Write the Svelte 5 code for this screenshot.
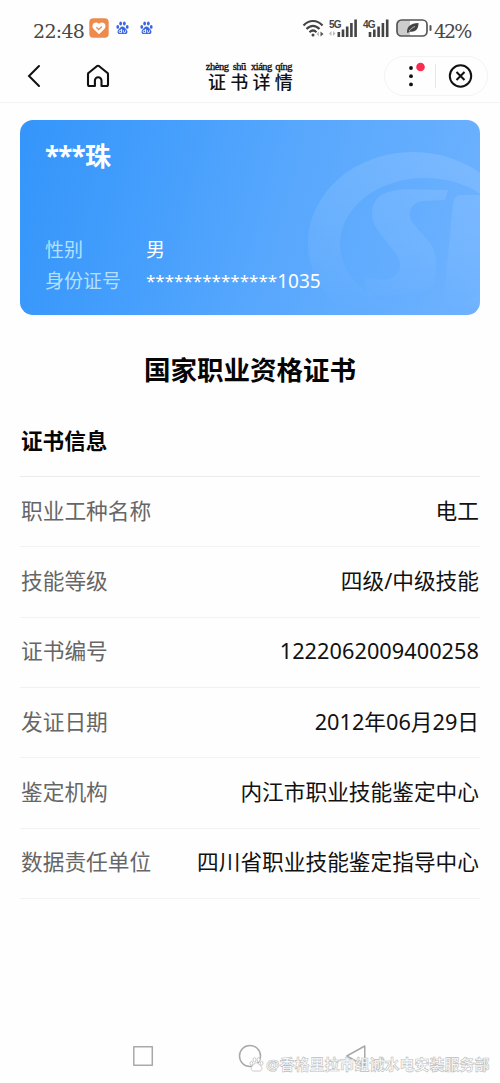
<script>
  const title = [
    { py: 'zhèng', zi: '证' },
    { py: 'shū', zi: '书' },
    { py: 'xiáng', zi: '详' },
    { py: 'qíng', zi: '情' }
  ];

  const rows = [
    { label: '职业工种名称', value: '电工' },
    { label: '技能等级', value: '四级/中级技能' },
    { label: '证书编号', value: '1222062009400258', num: true },
    { label: '发证日期', value: '2012年06月29日' },
    { label: '鉴定机构', value: '内江市职业技能鉴定中心' },
    { label: '数据责任单位', value: '四川省职业技能鉴定指导中心' }
  ];
</script>

{#snippet paw()}
  <svg class="paw" width="13" height="14" viewBox="0 0 14 15">
    <ellipse cx="1.9" cy="6.3" rx="1.5" ry="2" />
    <ellipse cx="5" cy="2.6" rx="1.5" ry="2.1" />
    <ellipse cx="9" cy="2.6" rx="1.5" ry="2.1" />
    <ellipse cx="12.1" cy="6.3" rx="1.5" ry="2" />
    <path d="M7 5.8c2 0 2.7 2 4.2 3.2 2 1.7 1.3 5-1.2 5H4c-2.5 0-3.2-3.3-1.2-5C4.3 7.8 5 5.8 7 5.8z" />
    <path class="du" d="M6 8.5v4H4.6a1.2 1.2 0 0 1 0-2.5H6M8 10v1.6c0 1.2 2.2 1.2 2.2 0V10" />
  </svg>
{/snippet}

<div class="screen">
  <div class="status">
    <span class="time">22:48</span>
    <svg class="heart" width="20" height="20" viewBox="0 0 20 20">
      <rect x=".3" y=".3" width="19.4" height="19.4" rx="4" fill="#ee8a4e" />
      <path d="M10 16.3 4.6 11C1.3 7.4 5.8 2.2 10 5.8c4.2-3.6 8.7 1.6 5.4 5.2z" fill="#fff" />
      <path d="M7.4 9.3 9.7 11.5l3.2-3" fill="none" stroke="#ee8a4e" stroke-width="1.3" />
    </svg>
    {@render paw()}
    {@render paw()}

    <div class="signals">
      <svg width="142" height="22" viewBox="0 0 142 22">
        <g fill="none" stroke="#444" stroke-width="2.2">
          <path d="M1.5 7.5c5.5-6 13.5-6 19 0" />
          <path d="M4.5 11c4-4.3 9-4.3 13 0" />
          <path d="M7.5 14.2c2.3-2.2 4.7-2.2 7 0" />
        </g>
        <circle cx="11" cy="17" r="1.5" fill="#444" />
        <path d="M17 13.5v5l-2.5-2.5z" fill="#bbb" />
        <path d="M18.5 13.5v5l3-2.5z" fill="#555" />
        <text x="27" y="9.5">5G</text>
        <path d="M29.5 13v5L27 15.5zM31 13v5l2.5-2.5z" fill="#bbb" />
        <g fill="#444">
          <rect x="35.5" y="14" width="2.6" height="5" />
          <rect x="39.7" y="11.5" width="2.6" height="7.5" />
          <rect x="43.9" y="8.5" width="2.6" height="10.5" />
          <rect x="48.1" y="5" width="2.6" height="14" />
          <rect x="52.3" y="1.5" width="2.6" height="17.5" />
        </g>
        <text x="61" y="9.5">4G</text>
        <g fill="#444">
          <rect x="66.7" y="14" width="2.6" height="5" />
          <rect x="71" y="11.5" width="2.6" height="7.5" />
          <rect x="75.3" y="8.5" width="2.6" height="10.5" />
          <rect x="79.6" y="5" width="2.6" height="14" />
          <rect x="83.9" y="1.5" width="2.6" height="17.5" />
        </g>
        <path d="M99 2h9v16h-9a4 4 0 0 1-4-4V6a4 4 0 0 1 4-4z" fill="#ccc" />
        <rect x="95" y="2" width="30" height="16" rx="4.5" fill="none" stroke="#555" stroke-width="1.7" />
        <rect x="127.5" y="7" width="2" height="6" rx="1" fill="#555" />
        <path d="M105 14.5c0-6 3-9 11.5-9.5 0 6-2.5 9.5-9 8.5l-1.5 1.5z" fill="#444" />
        <path d="M107 13c2-2.300 3.500-3.500 6-4.500" fill="none" stroke="#ddd" stroke-width=".8" />
      </svg>
      <span class="time pct">42%</span>
    </div>
  </div>

  <div class="nav">
    <svg class="back" width="14" height="24" viewBox="0 0 14 24">
      <path d="M12 2 2 12l10 10" fill="none" stroke="#111" stroke-width="2" stroke-linecap="round" />
    </svg>
    <svg class="home" width="24" height="24" viewBox="0 0 24 24">
      <path d="M2 10.3a2 2 0 0 1 .8-1.6l8-6.5a2 2 0 0 1 2.4 0l8 6.5a2 2 0 0 1 .8 1.6V20.5a1.5 1.5 0 0 1-1.5 1.5H15.5V16.5a3.3 3.3 0 0 0-6.6 0V22H3.5A1.5 1.5 0 0 1 2 20.5z" fill="none" stroke="#111" stroke-width="2.1" stroke-linejoin="round" />
    </svg>
    <div class="title">
      {#each title as t}
        <div class="char"><span class="py">{t.py}</span><span class="zi">{t.zi}</span></div>
      {/each}
    </div>
    <div class="capsule">
      <svg width="104" height="40" viewBox="0 0 104 40">
        <g fill="#111">
          <circle cx="27" cy="12" r="1.9" />
          <circle cx="27" cy="20.2" r="1.9" />
          <circle cx="27" cy="28.4" r="1.9" />
        </g>
        <circle cx="36.5" cy="11" r="4.3" fill="#fb2c50" />
        <path d="M51.5 8v24" stroke="#e6e6e6" />
        <circle cx="76.5" cy="20" r="10.7" fill="none" stroke="#111" stroke-width="2" />
        <path d="m72.5 16 8 8m0-8-8 8" stroke="#111" stroke-width="2" />
      </svg>
    </div>
  </div>

  <div class="card">
    <svg class="emblem" width="460" height="195" viewBox="0 0 460 195">
      <defs>
        <linearGradient id="ring" x1="0" y1="32" x2="0" y2="192" gradientUnits="userSpaceOnUse">
          <stop offset="0" stop-color="#fff" stop-opacity=".12" />
          <stop offset=".6" stop-color="#fff" stop-opacity=".065" />
          <stop offset="1" stop-color="#fff" stop-opacity="0" />
        </linearGradient>
      </defs>
      <g fill="url(#ring)">
        <path fill-rule="evenodd" d="M288 123a105 91 0 1 0 210 0a105 91 0 1 0-210 0zM320 124a85 66 0 1 0 170 0a85 66 0 1 0-170 0z" />
        <path d="M428 70 425 80 402 81C389 83 387 96 393 103L410 123C417 132 417 148 415 157 413 167 410 170 402 172 384 175 364 176 347 175L344 157C356 160 370 162 376 155 382 149 381 141 376 134L359 112C349 99 350 84 360 76 368 70 380 69 393 69.5z" />
        <path d="M441 75H460V195H422L433 84C434 78 436 75 441 75z" />
      </g>
    </svg>
    <div class="name">***珠</div>
    <div class="info">
      <span class="key">性别</span><span>男</span>
      <span class="key">身份证号</span><span class="idno"><span class="stars">**************</span>1035</span>
    </div>
  </div>

  <h1>国家职业资格证书</h1>
  <h2>证书信息</h2>

  <div class="list">
    {#each rows as row}
      <div class="row">
        <span class="label">{row.label}</span>
        <span class="value" class:num={row.num}>{row.value}</span>
      </div>
    {/each}
  </div>

  <div class="keys">
    <svg width="230" height="24" viewBox="0 0 230 24">
      <g fill="none" stroke="#a9a9a9" stroke-width="1.5" stroke-linejoin="round">
        <rect x="1.8" y="2.8" width="18.5" height="18.5" />
        <circle cx="118" cy="12" r="10.5" />
        <path d="M232.8 2v20l-18-10z" />
      </g>
    </svg>
  </div>
  <div class="mark">
    <svg width="15" height="15" viewBox="0 0 14 15" fill="#fff" stroke="#bbb" stroke-width=".8">
      <ellipse cx="1.9" cy="6.3" rx="1.4" ry="1.9" />
      <ellipse cx="5" cy="2.8" rx="1.5" ry="2.1" />
      <ellipse cx="9" cy="2.8" rx="1.5" ry="2.1" />
      <ellipse cx="12.1" cy="6.3" rx="1.4" ry="1.9" />
      <path d="M7 5.8c2 0 2.7 2 4.2 3.2 2 1.7 1.3 5-1.2 5H4c-2.5 0-3.2-3.3-1.2-5C4.3 7.8 5 5.8 7 5.8z" />
    </svg>
    <span>@香格里拉市组诚水电安装服务部</span>
  </div>
</div>

<style>
  :global(body) {
    background: #fefefe;
  }
  .screen {
    position: relative;
    width: 500px;
    height: 1083px;
    overflow: hidden;
    background: #fefefe;
    font-family: 'Noto Sans', 'Noto Sans CJK SC', sans-serif;
    color: #111;
    display: flex;
    flex-direction: column;
  }
  svg {
    display: block;
    flex-shrink: 0;
  }
  .status {
    height: 50px;
    box-sizing: border-box;
    padding: 18px 30px 0 33px;
    display: flex;
    align-items: flex-start;
  }
  .time {
    font-family: 'DejaVu Serif', serif;
    font-size: 19px;
    line-height: 27px;
    letter-spacing: -0.7px;
    color: #484848;
    width: 56px;
  }
  .paw {
    margin: 3px 0 0 7px;
    fill: #3a66e0;
  }
  .paw + .paw {
    margin-left: 11px;
  }
  .paw .du {
    fill: none;
    stroke: #fff;
    stroke-width: 1;
  }
  .signals {
    margin-left: auto;
    display: flex;
  }
  .signals text {
    font: bold 10px 'Liberation Sans', sans-serif;
    letter-spacing: -0.8px;
    fill: #444;
  }
  .pct {
    width: 36px;
    margin-left: -10px;
    letter-spacing: -2px;
  }
  .nav {
    height: 53px;
    box-sizing: border-box;
    border-bottom: 1px solid #f3f3f3;
    padding: 0 12px 0 27px;
    display: flex;
    align-items: center;
  }
  .home {
    margin-left: 45px;
  }
  .title {
    display: flex;
    margin-left: 96px;
  }
  .char {
    width: 22.2px;
    display: flex;
    flex-direction: column;
    align-items: center;
  }
  .py {
    font: 10.5px/12px 'Liberation Serif', serif;
    letter-spacing: -0.5px;
    -webkit-text-stroke: 0.35px #111;
  }
  .zi {
    font-size: 18px;
    font-weight: 500;
    line-height: 18px;
  }
  .capsule {
    margin-left: auto;
    box-sizing: border-box;
    width: 104px;
    height: 40px;
    border: 1px solid #f3f3f3;
    border-radius: 20px;
  }
  .capsule svg {
    margin: -1px;
  }
  .card {
    position: relative;
    margin: 17px 20px 0;
    height: 195px;
    box-sizing: border-box;
    border-radius: 13px;
    overflow: hidden;
    padding: 18px 25px 0;
    background: linear-gradient(105deg, #3495fa 0%, #429dfc 25%, #57a7fd 55%, #6eb2ff 100%);
    color: #fff;
  }
  .emblem {
    position: absolute;
    left: 0;
    top: 0;
  }
  .name {
    font-size: 26px;
    font-weight: bold;
    line-height: 36px;
    letter-spacing: -0.8px;
  }
  .info {
    margin-top: 61px;
    display: grid;
    grid-template-columns: 101px auto;
    font-size: 19px;
    line-height: 31px;
  }
  .key {
    color: #b4e0ff;
  }
  .idno {
    line-height: 29px;
  }
  .stars {
    font-size: 17px;
    vertical-align: 1px;
  }
  h1 {
    margin: 37px 0 0;
    text-align: center;
    font-size: 26.5px;
    line-height: 36px;
    font-weight: bold;
    color: #050505;
  }
  h2 {
    margin: 38px 21px 0;
    font-size: 21.6px;
    line-height: 30px;
    font-weight: bold;
    color: #050505;
  }
  .list {
    margin: 20px 20px 0;
    border-top: 1px solid #ebebeb;
  }
  .row {
    height: 70.35px;
    box-sizing: border-box;
    border-bottom: 1px solid #f2f2f2;
    padding: 0 1px 2px 1px;
    display: flex;
    justify-content: space-between;
    align-items: center;
    font-size: 21.7px;
    line-height: 30px;
  }
  .label {
    color: #666;
  }
  .num {
    letter-spacing: 0.05px;
  }
  .keys {
    margin-top: 145px;
    padding-left: 132px;
  }
  .keys svg {
    overflow: visible;
  }
  .mark {
    position: absolute;
    left: 249px;
    top: 1054px;
    display: flex;
    align-items: center;
    gap: 2px;
    font-size: 15px;
    line-height: 20px;
    font-weight: bold;
    white-space: nowrap;
    color: #fff;
    -webkit-text-stroke: 0.6px #bdbdbd;
  }
</style>
